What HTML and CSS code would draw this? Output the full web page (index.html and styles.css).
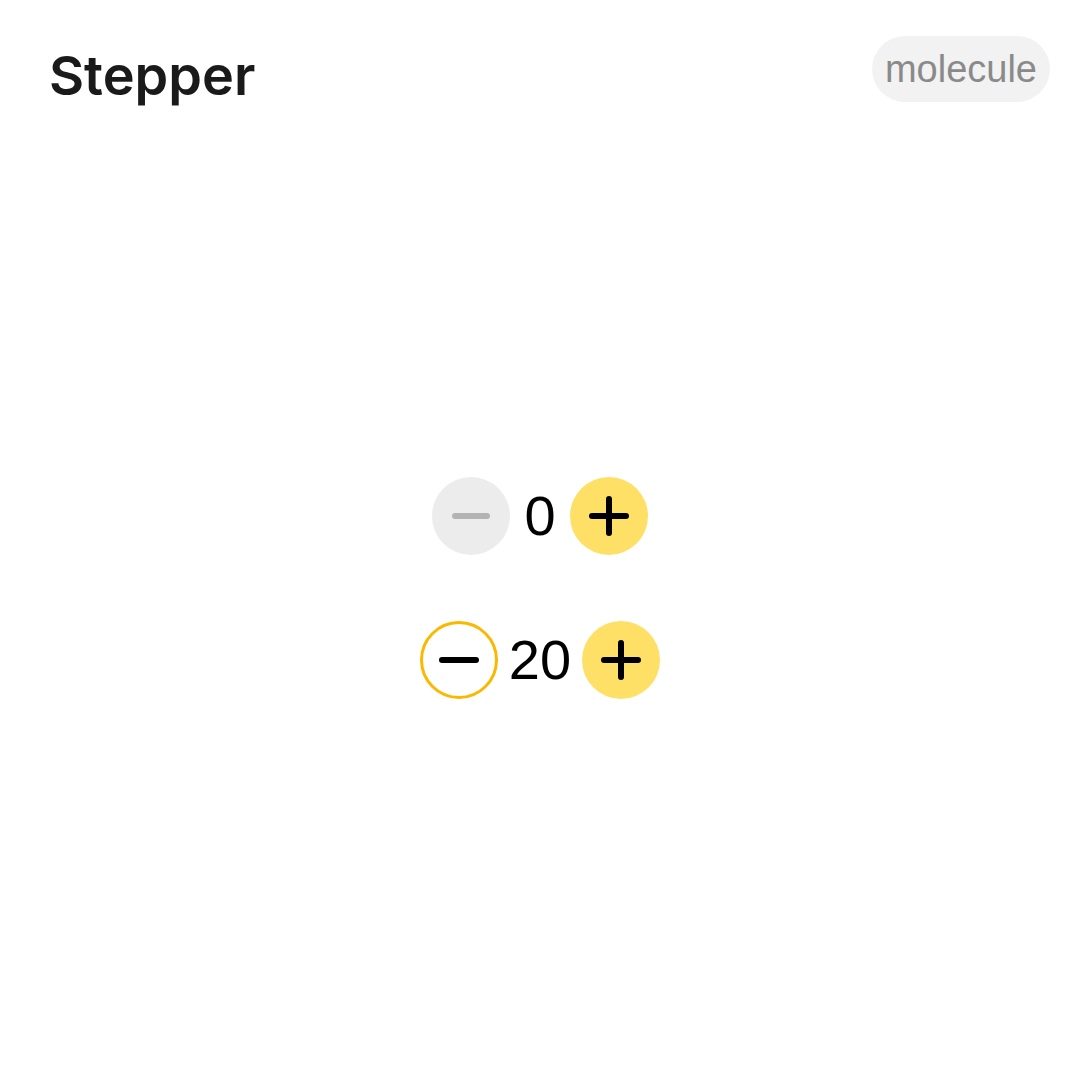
FILE: index.html
```html
<!DOCTYPE html>
<html>
<head>
<meta charset="utf-8">
<link rel="stylesheet" href="styles.css">
</head>
<body>
<div class="page">
  <header class="header">
    <h1 class="title">Stepper</h1>
    <span class="badge">molecule</span>
  </header>
  <main class="stage">
    <div class="stepper">
      <button class="btn btn-disabled" aria-label="decrease">
        <svg viewBox="0 0 78 78" width="78" height="78"><line x1="23" y1="39" x2="55" y2="39" stroke="#b3b3b3" stroke-width="6" stroke-linecap="round"/></svg>
      </button>
      <span class="value">0</span>
      <button class="btn btn-filled" aria-label="increase">
        <svg viewBox="0 0 78 78" width="78" height="78"><line x1="22" y1="39" x2="56" y2="39" stroke="#000" stroke-width="6" stroke-linecap="round"/><line x1="39" y1="22" x2="39" y2="56" stroke="#000" stroke-width="6" stroke-linecap="round"/></svg>
      </button>
    </div>
    <div class="stepper">
      <button class="btn btn-outline" aria-label="decrease">
        <svg viewBox="0 0 72 72" width="72" height="72"><line x1="19" y1="36" x2="53" y2="36" stroke="#000" stroke-width="6" stroke-linecap="round"/></svg>
      </button>
      <span class="value">20</span>
      <button class="btn btn-filled" aria-label="increase">
        <svg viewBox="0 0 78 78" width="78" height="78"><line x1="22" y1="39" x2="56" y2="39" stroke="#000" stroke-width="6" stroke-linecap="round"/><line x1="39" y1="22" x2="39" y2="56" stroke="#000" stroke-width="6" stroke-linecap="round"/></svg>
      </button>
    </div>
  </main>
</div>
</body>
</html>
```

FILE: styles.css
```css
html, body {
  margin: 0;
  padding: 0;
  background: #ffffff;
}

.page {
  width: 1080px;
  height: 1080px;
  display: flex;
  flex-direction: column;
}

.header {
  display: flex;
  justify-content: space-between;
  align-items: flex-start;
  padding: 36px 30px 0 49px;
}

.title {
  margin: 0;
  margin-top: 8px;
  font-family: Inter, "Liberation Sans", sans-serif;
  font-weight: 600;
  font-size: 54px;
  line-height: 64px;
  color: #1a1a1a;
  letter-spacing: 0;
}

.badge {
  display: inline-flex;
  align-items: center;
  height: 66px;
  padding: 0 13px;
  border-radius: 33px;
  background: #f2f2f2;
  color: #8a8a8a;
  font-family: "Liberation Sans", Arial, sans-serif;
  font-size: 38px;
}

.stage {
  display: flex;
  flex-direction: column;
  align-items: center;
  gap: 66px;
  padding-top: 369px;
}

.stepper {
  display: flex;
  align-items: center;
  gap: 11px;
}

.btn {
  width: 78px;
  height: 78px;
  border-radius: 50%;
  border: none;
  padding: 0;
  margin: 0;
  display: flex;
  align-items: center;
  justify-content: center;
  box-sizing: border-box;
}

.btn svg {
  display: block;
}

.btn-disabled {
  background: #ececec;
}

.btn-filled {
  background: #ffe066;
}

.btn-outline {
  background: #ffffff;
  border: 3px solid #fbb800;
}

.value {
  min-width: 38px;
  text-align: center;
  font-family: "Liberation Sans", Arial, sans-serif;
  font-size: 56px;
  line-height: 78px;
  color: #000000;
}
```
